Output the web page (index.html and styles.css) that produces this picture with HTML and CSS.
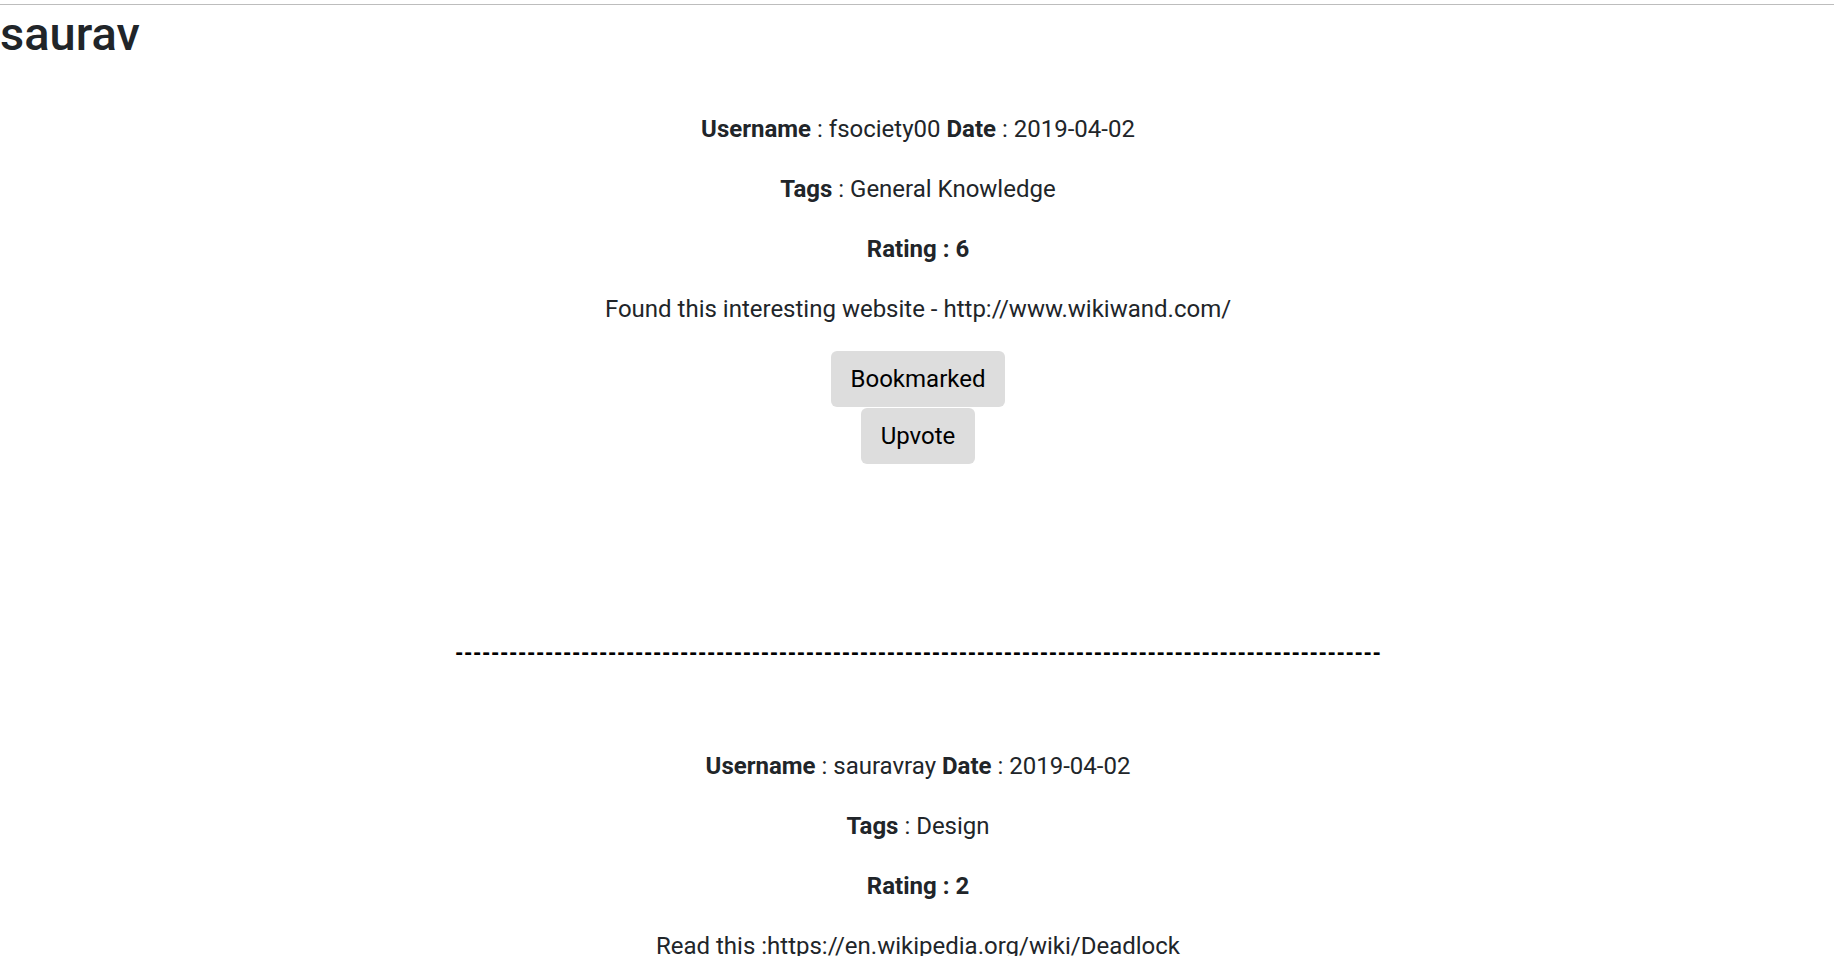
FILE: index.html
```html
<!DOCTYPE html>
<html lang="en">
<head>
<meta charset="utf-8">
<title>saurav</title>
<link rel="stylesheet" href="styles.css">
</head>
<body>
<div class="topbar"></div>
<h1 class="title">saurav</h1>
<main class="feed">
  <section class="post">
    <p class="meta"><b>Username</b> : fsociety00 <b>Date</b> : 2019-04-02</p>
    <p class="meta"><b>Tags</b> : General Knowledge</p>
    <p class="meta"><b>Rating : 6</b></p>
    <p class="meta">Found this interesting website - http://www.wikiwand.com/</p>
    <div class="actions">
      <button class="btn">Bookmarked</button>
      <button class="btn">Upvote</button>
    </div>
  </section>
  <p class="sep"><b>-------------------------------------------------------------------------------------------------------</b></p>
  <section class="post">
    <p class="meta"><b>Username</b> : sauravray <b>Date</b> : 2019-04-02</p>
    <p class="meta"><b>Tags</b> : Design</p>
    <p class="meta"><b>Rating : 2</b></p>
    <p class="meta">Read this :https://en.wikipedia.org/wiki/Deadlock</p>
    <div class="actions">
      <button class="btn">Bookmark</button>
      <button class="btn">Upvote</button>
    </div>
  </section>
</main>
</body>
</html>
```
FILE: styles.css
```css
html, body {
  margin: 0;
  padding: 0;
  background: #ffffff;
}
body {
  font-family: Roboto, "Liberation Sans", Arial, sans-serif;
  font-size: 24px;
  line-height: 36px;
  color: #212529;
}
.topbar {
  height: 4px;
  border-bottom: 1px solid #bdbdbd;
}
.title {
  margin: 0;
  font-size: 47px;
  line-height: 57.6px;
  font-weight: 500;
  color: #212529;
}
.feed {
  text-align: center;
  padding-top: 48px;
  padding-left: 2px;
}
.post .meta {
  margin: 0 0 24px 0;
}
.actions {
  display: flex;
  flex-direction: column;
  align-items: center;
  gap: 1px;
}
.btn {
  font-family: Roboto, "Liberation Sans", Arial, sans-serif;
  font-size: 24px;
  line-height: 36px;
  color: #000;
  background: #dddddd;
  border: none;
  border-radius: 6px;
  padding: 10px 20px;
  margin: 0;
}
.sep {
  margin: 171px 0 77px 0;
  font-size: 20px;
  line-height: 36px;
  font-weight: 700;
  white-space: nowrap;
  color: #000;
}
```
